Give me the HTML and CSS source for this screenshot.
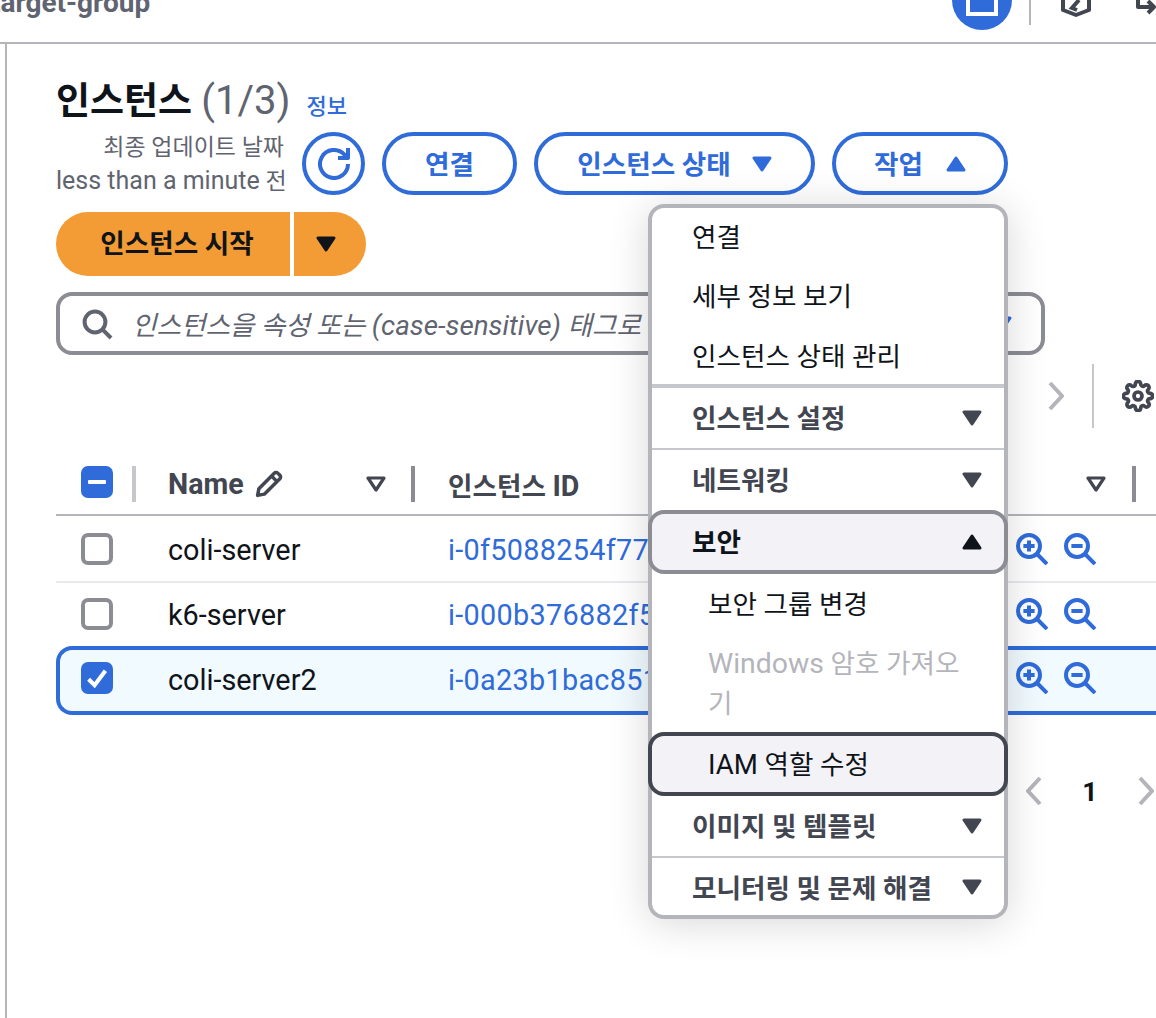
FILE: index.html
```html
<!DOCTYPE html>
<html lang="ko">
<head>
<meta charset="utf-8">
<title>인스턴스</title>
<link rel="stylesheet" href="styles.css">
</head>
<body>
<header class="topbar">
  <span class="crumb">target-group</span>
  <span class="round-tool"><svg class="round-icon" viewBox="0 0 32 32"><rect x="2" y="-14" width="28" height="28" fill="none" stroke="#fff" stroke-width="4"/></svg></span>
  <span class="top-sep"></span>
  <svg class="shield" viewBox="0 0 30 28"><path d="M2 -8V22l13 5 13-5V-8" fill="none" stroke="#424650" stroke-width="4" stroke-linejoin="round"/><path d="M18 12l-7 8 5 2" fill="none" stroke="#424650" stroke-width="4"/></svg>
  <svg class="exit" viewBox="0 0 20 30"><path d="M2 -6V7h16M12 1l6 6-6 6" fill="none" stroke="#424650" stroke-width="4" stroke-linejoin="round"/></svg>
</header>

<main class="content">
  <div class="title-row">
    <h1 class="title">인스턴스 <span class="count">(1/3)</span></h1>
    <a class="info">정보</a>
  </div>

  <div class="actions">
    <div class="updated"><div>최종 업데이트 날짜</div><div><span class="latin">less than a minute</span> 전</div></div>
    <button class="btn btn-icon"><svg class="ic32" viewBox="0 0 16 16"><path d="M10 5h5V0" fill="none" stroke="currentColor" stroke-width="2" stroke-linejoin="round"/><path d="M15 8a7 7 0 1 1-2-4.9L15 5" fill="none" stroke="currentColor" stroke-width="2"/></svg></button>
    <button class="btn btn-connect"><span>연결</span></button>
    <button class="btn btn-state"><span>인스턴스 상태</span><svg class="caret" viewBox="0 0 20 16"><path d="M2 2h16l-8 12z" fill="currentColor" stroke="currentColor" stroke-width="3" stroke-linejoin="round"/></svg></button>
    <button class="btn btn-work"><span>작업</span><svg class="caret" viewBox="0 0 20 16"><path d="M2 14h16L10 2z" fill="currentColor" stroke="currentColor" stroke-width="3" stroke-linejoin="round"/></svg></button>
  </div>

  <div class="split">
    <button class="split-main"><span>인스턴스 시작</span></button>
    <button class="split-caret"><svg class="caret" viewBox="0 0 20 16"><path d="M2 2h16l-8 12z" fill="currentColor" stroke="currentColor" stroke-width="3" stroke-linejoin="round"/></svg></button>
  </div>

  <div class="search">
    <svg class="ic32 search-icon" viewBox="0 0 16 16"><circle cx="7" cy="7" r="5.2" fill="none" stroke="currentColor" stroke-width="2"/><path d="M10.7 10.7 15 15" stroke="currentColor" stroke-width="2" fill="none"/></svg>
    <span class="placeholder">인스턴스을 속성 또는 <span class="latin-input">(case-sensitive)</span> 태그로 찾기</span>
    <svg class="caret search-caret" viewBox="0 0 20 16"><path d="M2 2h16l-8 12z" fill="currentColor" stroke="currentColor" stroke-width="3" stroke-linejoin="round"/></svg>
  </div>

  <div class="toolbar">
    <svg class="chev" viewBox="0 0 16 32"><path d="M2 3l12 13L2 29" fill="none" stroke="currentColor" stroke-width="4"/></svg>
    <span class="tool-sep"></span>
    <svg class="gear" viewBox="0 0 24 24"><circle cx="12" cy="12" r="3" fill="none" stroke="currentColor" stroke-width="2.8"/><path fill="none" stroke="currentColor" stroke-width="2.8" stroke-linejoin="round" d="M19.4 15a1.65 1.65 0 0 0 .33 1.82l.06.06a2 2 0 0 1 0 2.83 2 2 0 0 1-2.83 0l-.06-.06a1.65 1.65 0 0 0-1.82-.33 1.65 1.65 0 0 0-1 1.51V21a2 2 0 0 1-2 2 2 2 0 0 1-2-2v-.09A1.65 1.65 0 0 0 9 19.4a1.65 1.65 0 0 0-1.82.33l-.06.06a2 2 0 0 1-2.83 0 2 2 0 0 1 0-2.83l.06-.06a1.65 1.65 0 0 0 .33-1.82 1.65 1.65 0 0 0-1.51-1H3a2 2 0 0 1-2-2 2 2 0 0 1 2-2h.09A1.65 1.65 0 0 0 4.6 9a1.65 1.65 0 0 0-.33-1.82l-.06-.06a2 2 0 0 1 0-2.83 2 2 0 0 1 2.83 0l.06.06a1.65 1.65 0 0 0 1.82.33H9a1.65 1.65 0 0 0 1-1.51V3a2 2 0 0 1 2-2 2 2 0 0 1 2 2v.09a1.65 1.65 0 0 0 1 1.51 1.65 1.65 0 0 0 1.82-.33l.06-.06a2 2 0 0 1 2.83 0 2 2 0 0 1 0 2.83l-.06.06a1.65 1.65 0 0 0-.33 1.82V9a1.65 1.65 0 0 0 1.51 1H21a2 2 0 0 1 2 2 2 2 0 0 1-2 2h-.09a1.65 1.65 0 0 0-1.51 1z"/></svg>
  </div>

  <div class="table">
    <div class="thead">
      <div class="th th-check"><span class="box box-on"><span class="dash"></span></span></div>
      <div class="th th-name"><span class="latin-th">Name</span><svg class="pencil" viewBox="0 0 16 16"><path d="M1.5 14.5l.7-3.8L11 1.8a1.4 1.4 0 0 1 2 0l1.2 1.2a1.4 1.4 0 0 1 0 2l-8.9 8.8zM9.5 3.5l3 3" fill="none" stroke="currentColor" stroke-width="2" stroke-linejoin="round"/></svg><svg class="filter" viewBox="0 0 20 16"><path d="M2 2h16l-8 12z" fill="none" stroke="currentColor" stroke-width="3.2" stroke-linejoin="round"/></svg></div>
      <div class="th th-id"><span class="th-label">인스턴스 <span class="latin-th">ID</span></span><svg class="filter" viewBox="0 0 20 16"><path d="M2 2h16l-8 12z" fill="none" stroke="currentColor" stroke-width="3.2" stroke-linejoin="round"/></svg></div>
    </div>

    <div class="row row-a">
      <div class="c-check"><span class="box"></span></div>
      <div class="c-name">coli-server</div>
      <div class="c-id">i-0f5088254f77</div>
      <div class="c-zoom">
        <svg class="ic32" viewBox="0 0 16 16"><circle cx="6.5" cy="6.5" r="5.5" fill="none" stroke="currentColor" stroke-width="2"/><path d="M10.5 10.5l5 5M3.7 6.5h5.6M6.5 3.7v5.6" stroke="currentColor" stroke-width="2" fill="none"/></svg>
        <svg class="ic32" viewBox="0 0 16 16"><circle cx="6.5" cy="6.5" r="5.5" fill="none" stroke="currentColor" stroke-width="2"/><path d="M10.5 10.5l5 5M3.7 6.5h5.6" stroke="currentColor" stroke-width="2" fill="none"/></svg>
      </div>
    </div>
    <div class="row row-b">
      <div class="c-check"><span class="box"></span></div>
      <div class="c-name">k6-server</div>
      <div class="c-id">i-000b376882f5</div>
      <div class="c-zoom">
        <svg class="ic32" viewBox="0 0 16 16"><circle cx="6.5" cy="6.5" r="5.5" fill="none" stroke="currentColor" stroke-width="2"/><path d="M10.5 10.5l5 5M3.7 6.5h5.6M6.5 3.7v5.6" stroke="currentColor" stroke-width="2" fill="none"/></svg>
        <svg class="ic32" viewBox="0 0 16 16"><circle cx="6.5" cy="6.5" r="5.5" fill="none" stroke="currentColor" stroke-width="2"/><path d="M10.5 10.5l5 5M3.7 6.5h5.6" stroke="currentColor" stroke-width="2" fill="none"/></svg>
      </div>
    </div>
    <div class="row row-selected">
      <div class="c-check"><span class="box box-on"><svg class="tick" viewBox="0 0 20 20"><path d="M3 11l5 5 9-12" fill="none" stroke="#fff" stroke-width="3.4"/></svg></span></div>
      <div class="c-name">coli-server2</div>
      <div class="c-id">i-0a23b1bac851</div>
      <div class="c-zoom">
        <svg class="ic32" viewBox="0 0 16 16"><circle cx="6.5" cy="6.5" r="5.5" fill="none" stroke="currentColor" stroke-width="2"/><path d="M10.5 10.5l5 5M3.7 6.5h5.6M6.5 3.7v5.6" stroke="currentColor" stroke-width="2" fill="none"/></svg>
        <svg class="ic32" viewBox="0 0 16 16"><circle cx="6.5" cy="6.5" r="5.5" fill="none" stroke="currentColor" stroke-width="2"/><path d="M10.5 10.5l5 5M3.7 6.5h5.6" stroke="currentColor" stroke-width="2" fill="none"/></svg>
      </div>
    </div>
  </div>

  <div class="pager">
    <svg class="chev" viewBox="0 0 16 32"><path d="M14 3 2 16l12 13" fill="none" stroke="currentColor" stroke-width="4"/></svg>
    <span class="page-num">1</span>
    <svg class="chev" viewBox="0 0 16 32"><path d="M2 3l12 13L2 29" fill="none" stroke="currentColor" stroke-width="4"/></svg>
  </div>

  <div class="menu">
    <div class="mi mi-first">연결</div>
    <div class="mi">세부 정보 보기</div>
    <div class="mi mi-last">인스턴스 상태 관리</div>
    <div class="mg mg-thick"><span>인스턴스 설정</span><svg class="caret" viewBox="0 0 20 16"><path d="M2 2h16l-8 12z" fill="currentColor" stroke="currentColor" stroke-width="3" stroke-linejoin="round"/></svg></div>
    <div class="mg mg-thin"><span>네트워킹</span><svg class="caret" viewBox="0 0 20 16"><path d="M2 2h16l-8 12z" fill="currentColor" stroke="currentColor" stroke-width="3" stroke-linejoin="round"/></svg></div>
    <div class="mg mg-open"><span>보안</span><svg class="caret" viewBox="0 0 20 16"><path d="M2 14h16L10 2z" fill="currentColor" stroke="currentColor" stroke-width="3" stroke-linejoin="round"/></svg></div>
    <div class="ms">보안 그룹 변경</div>
    <div class="ms ms-off"><span class="latin-menu">Windows</span> 암호 가져오<br>기</div>
    <div class="ms ms-hover"><span><span class="latin-iam">IAM</span> 역할 수정</span></div>
    <div class="mg"><span>이미지 및 템플릿</span><svg class="caret" viewBox="0 0 20 16"><path d="M2 2h16l-8 12z" fill="currentColor" stroke="currentColor" stroke-width="3" stroke-linejoin="round"/></svg></div>
    <div class="mg mg-thin mg-end"><span>모니터링 및 문제 해결</span><svg class="caret" viewBox="0 0 20 16"><path d="M2 2h16l-8 12z" fill="currentColor" stroke="currentColor" stroke-width="3" stroke-linejoin="round"/></svg></div>
  </div>
</main>
</body>
</html>
```

FILE: styles.css
```css
* { box-sizing: border-box; }
html, body { margin: 0; height: 100%; overflow: hidden; background: #fff; }
body {
  font-family: Roboto, "Noto Sans CJK KR", sans-serif;
  font-size: 26.6px;
  color: #0f141a;
}
button { font: inherit; cursor: pointer; }

.topbar {
  height: 44px;
  border-bottom: 2px solid #b4b4bb;
  display: flex;
  align-items: flex-start;
  overflow: hidden;
}
.crumb {
  margin: -14px 0 0 -9px;
  font-weight: 700;
  font-size: 28px;
  line-height: 34px;
  color: #5f6470;
}
.round-tool {
  margin: -30px 0 0 auto;
  width: 60px;
  height: 60px;
  border-radius: 50%;
  background: #2f6bd9;
  display: flex;
  align-items: flex-start;
  justify-content: center;
  flex: none;
}
.round-icon { width: 32px; height: 32px; margin-top: 30px; overflow: visible; }
.top-sep { width: 2px; height: 25px; background: #b4b4bb; margin-left: 17px; flex: none; }
.shield { width: 30px; height: 28px; margin: -12px 0 0 30px; flex: none; overflow: visible; }
.exit { width: 20px; height: 30px; margin: 0 0 0 45px; flex: none; overflow: visible; }

.content {
  position: relative;
  margin-left: 5px;
  height: 974px;
  border-left: 2px solid #b4b4bb;
  padding-left: 49px;
}

.title-row { display: flex; align-items: baseline; height: 88px; padding-top: 32px; }
.title { margin: 0; font-size: 37px; font-weight: 700; line-height: 50px; }
.count { color: #5f6470; font-weight: 400; font-size: 40px; }
.info { margin-left: 16px; font-size: 22px; color: #2f6bd9; font-weight: 500; }

.actions { display: flex; gap: 17px; align-items: center; height: 63px; }
.updated {
  width: 229px;
  padding: 2px 1px 0 0;
  text-align: right;
  font-size: 23px;
  line-height: 33px;
  color: #5f6470;
  white-space: nowrap;
}
.latin { font-size: 25px; }
.btn {
  height: 63px;
  border: 4px solid #2f6bd9;
  border-radius: 32px;
  background: #fff;
  color: #2f6bd9;
  font-weight: 700;
  display: flex;
  align-items: center;
  justify-content: center;
  padding: 0;
}
.btn span { margin-bottom: 3px; }
.btn-icon { width: 63px; border-radius: 50%; }
.btn-connect { width: 135px; }
.btn-state { width: 281px; gap: 21px; }
.btn-work { width: 176px; gap: 23px; }
.ic32 { width: 32px; height: 32px; flex: none; }
.caret { width: 20px; height: 16px; flex: none; }

.split { display: flex; gap: 4px; margin-top: 17px; height: 64px; }
.split-main, .split-caret {
  border: 0;
  background: #f39c35;
  color: #0f141a;
  font-weight: 700;
  padding: 0;
  display: flex;
  align-items: center;
  justify-content: center;
}
.split-main span { margin-bottom: 5px; }
.split-main { width: 234px; border-radius: 32px 0 0 32px; padding-left: 8px; }
.split-caret { width: 72px; border-radius: 0 32px 32px 0; padding-right: 8px; }

.search {
  display: flex;
  align-items: center;
  width: 989px;
  height: 63px;
  margin-top: 16px;
  border: 4px solid #8c8c94;
  border-radius: 16px;
  padding: 0 29px 0 21px;
  color: #5f6470;
}
.placeholder { margin-left: 19px; font-style: italic; font-size: 26.6px; white-space: nowrap; overflow: hidden; flex: 1; }
.latin-input { font-size: 27.8px; }
.search-caret { color: #2f6bd9; }

.toolbar { display: flex; align-items: center; justify-content: flex-end; height: 64px; margin-top: 9px; padding-right: 2px; }
.chev { width: 16px; height: 32px; color: #b4b4bb; flex: none; }
.tool-sep { width: 2px; height: 64px; background: #c6c6cd; margin: 0 28px 0 28px; flex: none; }
.gear { width: 32px; height: 32px; color: #424650; flex: none; }

.table { margin-top: 38px; margin-right: -20px; }
.thead {
  display: flex;
  align-items: flex-start;
  height: 50px;
  border-bottom: 2px solid #b4b4bb;
  font-weight: 700;
  color: #424650;
}
.th { position: relative; display: flex; align-items: center; height: 36px; flex: none; }
.th::after { content: ""; position: absolute; right: 0; top: 0; width: 4px; height: 36px; background: #8c8c94; }
.th-check { width: 80px; padding-left: 25px; align-items: flex-start; }
.th-check::after { background: #c6c6cd; }
.th-name { width: 279px; padding-left: 32px; }
.th-id { width: 721px; padding-left: 33px; }
.latin-th { font-size: 28.6px; }
.th-label { white-space: nowrap; }
.pencil { width: 28px; height: 28px; margin-left: 11px; flex: none; }
.filter { width: 20px; height: 16px; position: absolute; flex: none; }
.th-name .filter { left: 230px; top: 10px; }
.th-id .filter { left: 671px; top: 10px; }

.box {
  display: flex;
  align-items: center;
  justify-content: center;
  width: 32px;
  height: 32px;
  border: 4px solid #8c8c94;
  border-radius: 7px;
  background: #fff;
  flex: none;
}
.box-on { background: #2f6bd9; border: 0; }
.dash { width: 18px; height: 4px; background: #fff; border-radius: 1px; }
.tick { width: 24px; height: 24px; }

.row { display: flex; align-items: center; height: 65px; font-size: 28.8px; }
.row-a { height: 67px; border-bottom: 2px solid #e9e9ed; }
.row-b { height: 63px; padding-bottom: 2px; }
.c-check { width: 80px; padding-left: 25px; flex: none; }
.c-name { width: 279px; padding: 3px 0 0 32px; flex: none; white-space: nowrap; }
.c-id { width: 601px; padding: 3px 0 0 33px; color: #2f6bd9; flex: none; white-space: nowrap; overflow: hidden; letter-spacing: .3px; }
.c-zoom { display: flex; gap: 16px; color: #2f6bd9; flex: none; }
.row-selected {
  height: 69px;
  border: 4px solid #2f6bd9;
  border-right: 0;
  border-radius: 16px 0 0 16px;
  background: #f1faff;
  padding-bottom: 5px;
}
.row-selected .c-check { width: 76px; padding-left: 21px; }

.pager { display: flex; align-items: center; height: 40px; margin-top: 56px; padding-right: 2px; }
.pager .chev:first-child { margin-left: auto; }
.page-num { font-weight: 700; width: 96px; text-align: center; }

.menu {
  position: absolute;
  left: 641px;
  top: 160px;
  width: 360px;
  height: 715px;
  border: 4px solid #b4b4bb;
  border-radius: 16px;
  background: #fff;
  box-shadow: 0 4px 40px rgba(0, 0, 0, .16);
}
.mi, .mg, .ms { display: flex; align-items: center; padding-left: 40px; height: 60px; white-space: nowrap; }
.mi, .ms { padding-bottom: 4px; }
.mg span { margin-bottom: 4px; }
.mi-first { height: 58px; }
.mi-last { height: 60px; }
.mg { justify-content: space-between; padding-right: 22px; font-weight: 700; color: #424650; }
.mg-thick { border-top: 4px solid #c6c6cd; height: 64px; margin-top: -2px; }
.mg-thin { border-top: 2px solid #c6c6cd; height: 62px; }
.mg-open {
  height: 64px;
  margin: 0 -4px;
  padding: 0 22px 0 40px;
  border: 4px solid #8c8c94;
  border-radius: 16px;
  background: #f3f3f7;
  color: #0f141a;
}
.ms { padding-left: 56px; font-weight: 400; }
.ms-off { display: block; height: 98px; padding-top: 10px; padding-bottom: 0; line-height: 40px; color: #b4b4bb; }
.latin-menu { font-size: 28.4px; }
.latin-iam { font-size: 27.6px; }
.ms-hover {
  height: 64px;
  margin: 0 -4px;
  padding-left: 56px;
  border: 4px solid #424650;
  border-radius: 16px;
  background: #f3f3f7;
}
.mg-end { height: 59px; }
.mg-end span { margin-bottom: 0; }
```
